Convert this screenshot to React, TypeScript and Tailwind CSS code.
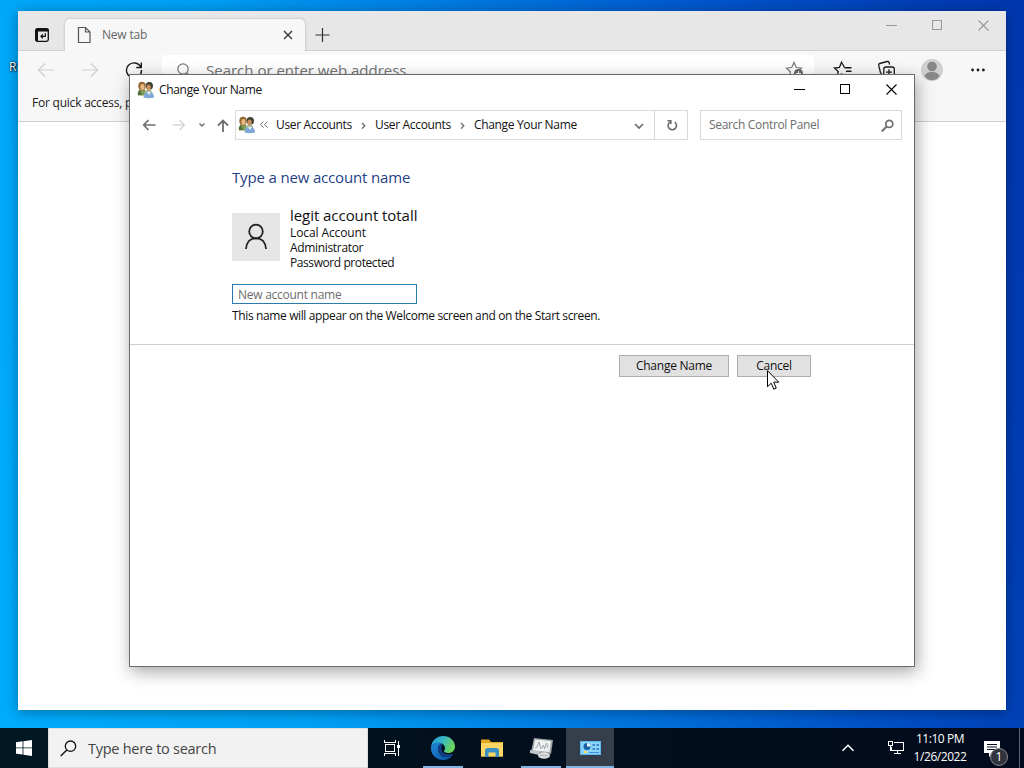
import type { ReactNode } from "react";

function Glyph({
  size = 16,
  className = "",
  children,
}: {
  size?: number;
  className?: string;
  children: ReactNode;
}) {
  return (
    <svg
      width={size}
      height={size}
      viewBox={`0 0 ${size} ${size}`}
      fill="none"
      stroke="currentColor"
      className={`block shrink-0 ${className}`}
    >
      {children}
    </svg>
  );
}

function UsersIcon() {
  return (
    <Glyph size={18} className="stroke-none">
      <path d="M1 14.500c-1-4 1-6.500 4-6.500s5 2 5 6.500z" fill="#7f9a55" />
      <path d="M1 12.500l1.500-4 2.500 5.500H1z" fill="#566b3c" />
      <ellipse cx="5" cy="5" rx="3.700" ry="4.200" fill="#94652f" />
      <ellipse cx="5.400" cy="6" rx="2.100" ry="2.900" fill="#e8b983" />
      <path d="M7.500 13c0-3 1.500-4.500 4-4.500s4 1.500 4 4.500z" fill="#a9bf9c" />
      <ellipse cx="12.300" cy="4.800" rx="3.700" ry="3.900" fill="#3f4030" />
      <ellipse cx="11.600" cy="6.500" rx="2.200" ry="2.900" fill="#c8905f" />
      <path d="M6.500 16.500c0-3.500 1.800-5.500 5.300-5.500s5.200 2 5.200 5.500c-3 1-7.500 1-10.500 0z" fill="#7fa8d6" />
      <path d="M10 11l2 3 2-3z" fill="#e7f0fa" />
    </Glyph>
  );
}

function PersonIcon() {
  return (
    <Glyph size={28} className="text-[#222]">
      <circle cx="14" cy="8.500" r="6.800" strokeWidth="1.800" />
      <path d="M4 26c.3-6.500 4-10.700 10-10.700S23.700 19.500 24 26" strokeWidth="1.800" />
    </Glyph>
  );
}

function WindowButtons({ color }: { color: string }) {
  return (
    <div className={`flex h-7 ${color}`}>
      <span className="flex w-[45px] items-center justify-center">
        <Glyph size={11}>
          <path d="M0 5.500h11" shapeRendering="crispEdges" />
        </Glyph>
      </span>
      <span className="flex w-[46px] items-center justify-center">
        <Glyph size={11}>
          <path d="M.5.5h9v9h-9z" shapeRendering="crispEdges" />
        </Glyph>
      </span>
      <span className="flex w-[46px] items-center justify-center">
        <Glyph size={11}>
          <path d="M.5.5l10 10M10.500.5l-10 10" strokeWidth="1.100" />
        </Glyph>
      </span>
    </div>
  );
}

function ToolCell({ children, className = "w-11" }: { children: ReactNode; className?: string }) {
  return (
    <span className={`flex h-[38px] shrink-0 items-center justify-center ${className}`}>{children}</span>
  );
}

function BrowserWindow() {
  return (
    <section className="absolute top-[11px] left-[18px] flex h-[699px] w-[988px] flex-col bg-white shadow-[0_2px_12px_rgba(0,0,0,0.35)]">
      <div className="flex h-10 bg-[#e7e7e7]">
        <div className="flex w-[47px] items-end justify-center border-b border-[#d0d0d0] pb-[7px]">
          <Glyph className="text-[#111]">
            <rect x="1.700" y="1.700" width="12.600" height="12.600" rx="1.800" strokeWidth="1.300" />
            <path d="M1.500 3.200h13" strokeWidth="2.600" />
            <path d="M2.800 3v11" strokeWidth="2.400" />
            <path d="M11.300 6.300v3H7.200M8.900 7.300L6.900 9.300l2 2" strokeWidth="1.200" />
          </Glyph>
        </div>
        <div className="mt-2 flex w-[240px] items-center rounded-t-[5px] bg-[#f7f7f7] shadow-[0_0_3px_rgba(0,0,0,0.22)] [clip-path:inset(-4px_-4px_0_-4px)]">
          <Glyph size={18} className="ml-[10px] text-[#555]">
            <path d="M3.500 1.500h7l4.500 4.500v10.500H3.500zM10.500 1.500V6H15" strokeWidth="1.200" />
          </Glyph>
          <span className="ml-[9px] text-[12px] tracking-[-0.2px] text-[#666]">New tab</span>
          <Glyph size={10} className="mr-[12px] ml-auto text-[#333]">
            <path d="M1 1l8 8M9 1L1 9" strokeWidth="1.300" />
          </Glyph>
        </div>
        <div className="flex flex-1 justify-between border-b border-[#d0d0d0]">
          <Glyph size={16} className="mt-4 ml-[9px] text-[#333]">
            <path d="M8.500 1v14M1.500 8h14" strokeWidth="1.200" />
          </Glyph>
          <WindowButtons color="text-[#989898]" />
        </div>
      </div>

      <div className="flex h-[71px] flex-col border-b border-[#cfcfcf] bg-[#f7f7f7]">
        <div className="flex h-[38px] pl-[6px] text-[#1b1b1b]">
          <ToolCell className="w-11 text-[#cfcfcf]">
            <Glyph size={18}>
              <path d="M17 9H1.500M8 2.500L1.500 9 8 15.500" strokeWidth="1.200" />
            </Glyph>
          </ToolCell>
          <ToolCell className="w-11 text-[#cfcfcf]">
            <Glyph size={18}>
              <path d="M1 9h15.500M10 2.500L16.500 9 10 15.500" strokeWidth="1.200" />
            </Glyph>
          </ToolCell>
          <ToolCell>
            <Glyph size={18}>
              <path d="M15.800 6.200A7.500 7.500 0 1 0 16.500 9M16.300 1.500v5h-5" strokeWidth="1.400" />
            </Glyph>
          </ToolCell>
          <div className="mt-1 ml-[6px] flex h-[30px] w-[652px] items-center rounded bg-white">
            <Glyph className="ml-[14px] text-[#777]">
              <circle cx="7" cy="7" r="5.200" strokeWidth="1.200" />
              <path d="M10.700 10.700l4 4" strokeWidth="1.200" />
            </Glyph>
            <span className="ml-[14px] text-[15px] text-[#757575]">Search or enter web address</span>
            <Glyph size={20} className="mr-[10px] ml-auto text-[#777]">
              <path
                d="M10 2.500l2.300 5 5.200.6-3.900 3.700 1 5.200-4.600-2.600L5.400 17l1-5.200L2.500 8.100l5.200-.6z"
                strokeWidth="1.200"
              />
              <circle cx="14.500" cy="13.500" r="4.500" fill="#666" stroke="none" />
              <path d="M14.500 11v5M12 13.500h5" stroke="#fff" />
            </Glyph>
          </div>
          <ToolCell className="ml-[7px] w-11">
            <Glyph size={20}>
              <path d="M11.500 7.800h7M13 11.300h5.500M13 14.800h5.500" strokeWidth="1.500" />
              <path
                d="M11.500 7.500L8.500 2.200 6.400 7.500l-5 .5 3.800 3.500-1 5 4.300-2.600 2 1.200"
                strokeWidth="1.300"
              />
            </Glyph>
          </ToolCell>
          <ToolCell>
            <Glyph size={20}>
              <path
                d="M5 13.500L3.600 13 1.700 5.400c-.2-1 .2-1.700 1-1.900l7.500-2c1-.2 1.600.2 1.900 1l.5 2"
                strokeWidth="1.300"
              />
              <rect x="6.800" y="7" width="10.500" height="10.500" rx="2" strokeWidth="1.300" />
              <path d="M12 9.200v6M9 12.200h6" strokeWidth="1.300" />
            </Glyph>
          </ToolCell>
          <ToolCell className="w-[46px]">
            <Glyph size={22} className="stroke-none">
              <circle cx="11" cy="11" r="11" fill="#d0d0d0" />
              <circle cx="11" cy="7.500" r="4.800" fill="#888" />
              <path
                d="M3.500 17c1.500-3.500 4.500-4 7.500-4s6 .5 7.500 4c-2 3-4.500 4.300-7.500 4.300S5.500 20 3.500 17z"
                fill="#888"
              />
            </Glyph>
          </ToolCell>
          <ToolCell className="w-[46px]">
            <Glyph size={16} className="fill-[#1b1b1b] stroke-none">
              <circle cx="2.600" cy="8" r="1.400" />
              <circle cx="8" cy="8" r="1.400" />
              <circle cx="13.400" cy="8" r="1.400" />
            </Glyph>
          </ToolCell>
        </div>
        <p className="mt-[5px] pl-[14px] text-[12px] leading-[18px] tracking-[-0.22px] text-[#1b1b1b]">
          For quick access, p
        </p>
      </div>
    </section>
  );
}

const crumbs = ["User Accounts", "User Accounts", "Change Your Name"];

function ControlPanelWindow() {
  return (
    <section className="absolute top-[74px] left-[129px] flex h-[593px] w-[786px] flex-col border border-[#6b6b6b] bg-white text-[12px] tracking-[-0.33px] text-[#111] shadow-[2px_5px_16px_rgba(0,0,0,0.35)]">
      <header className="flex h-[30px] items-start justify-between">
        <div className="flex h-[30px] items-center gap-[4px] pl-[7px]">
          <UsersIcon />
          <span>Change Your Name</span>
        </div>
        <WindowButtons color="text-black" />
      </header>

      <nav className="mt-[5px] flex h-[30px] items-center text-[#6d6d6d]">
        <Glyph size={14} className="ml-[12px]">
          <path d="M13.500 7H2M6.500 2L1.700 7l4.800 5" strokeWidth="1.700" />
        </Glyph>
        <Glyph size={14} className="ml-[16px] text-[#d6d6d6]">
          <path d="M.5 7H12M7.500 2l4.800 5-4.800 5" strokeWidth="1.500" />
        </Glyph>
        <Glyph size={8} className="ml-[12px]">
          <path d="M1.500 2.500L4 5l2.500-2.500" strokeWidth="1.400" />
        </Glyph>
        <Glyph size={14} className="ml-[10px]">
          <path d="M7 14V2.500M2 7.500l5-5 5 5" strokeWidth="1.800" />
        </Glyph>
        <div className="ml-[5px] flex h-[30px] w-[453px] items-center border border-[#d9d9d9]">
          <span className="ml-[2px]">
            <UsersIcon />
          </span>
          <Glyph size={10} className="ml-[3px]">
            <path d="M4.500 1.500L1.500 4.500l3 3M8.500 1.500L5.500 4.500l3 3" />
          </Glyph>
          <ol className="ml-[7px] flex items-center text-[#111]">
            {crumbs.map((crumb, i) => (
              <li key={i} className="flex items-center">
                {i > 0 && (
                  <Glyph size={7} className="mx-[8px] text-[#666]">
                    <path d="M2 1l2.800 2.800L2 6.600" strokeWidth="1.300" />
                  </Glyph>
                )}
                <span>{crumb}</span>
              </li>
            ))}
          </ol>
          <Glyph size={10} className="mr-[10px] ml-auto">
            <path d="M1 4l4 4 4-4" strokeWidth="1.700" />
          </Glyph>
          <span className="flex h-full w-[33px] items-center justify-center border-l border-[#d9d9d9]">
            <Glyph size={12} className="ml-px">
              <path d="M8.800 3.200A4.200 4.200 0 1 1 3.800 3.200M1.500 1.800h3.300v3.300" strokeWidth="1.600" />
            </Glyph>
          </span>
        </div>
        <div className="ml-3 flex h-[30px] w-[202px] items-center justify-between border border-[#d9d9d9] pr-[7px] pl-[8px]">
          <span>Search Control Panel</span>
          <Glyph size={13}>
            <circle cx="8.300" cy="4.900" r="3.500" strokeWidth="1.700" />
            <path d="M5.700 7.500L.8 12.400" strokeWidth="2" />
          </Glyph>
        </div>
      </nav>

      <main className="mt-[25px] flex h-[180px] flex-col border-b border-[#cfcfcf] pl-[102px]">
        <h1 className="mt-px text-[15px] leading-[22px] tracking-[-0.16px] text-[#1f3f87]">
          Type a new account name
        </h1>
        <div className="mt-[18px] flex h-[66px]">
          <div className="mt-[7px] flex h-12 w-12 items-center justify-center bg-[#e6e6e6]">
            <PersonIcon />
          </div>
          <div className="ml-[10px] leading-[15px]">
            <h2 className="text-[15px] leading-[19px] tracking-[-0.05px]">legit account totall</h2>
            <p className="tracking-[-0.1px]">Local Account</p>
            <p>Administrator</p>
            <p className="tracking-[-0.42px]">Password protected</p>
          </div>
        </div>
        <input
          className="mt-[12px] h-5 w-[185px] border border-[#2a7ab0] bg-white px-[5px] text-[12px] tracking-[-0.26px] outline-none placeholder:text-[#6d6d6d]"
          placeholder="New account name"
        />
        <p className="mt-[4px] leading-[16px] tracking-[-0.37px]">
          This name will appear on the Welcome screen and on the Start screen.
        </p>
      </main>

      <footer className="mt-[10px] flex justify-end gap-2 pr-[103px] tracking-[-0.25px]">
        <button className="h-[22px] w-[110px] border border-[#adadad] bg-[#e1e1e1]">Change Name</button>
        <button className="h-[22px] w-[74px] border border-[#adadad] bg-[#e1e1e1]">Cancel</button>
      </footer>
    </section>
  );
}

function EdgeLogo() {
  return (
    <svg width="26" height="26" viewBox="0 0 26 26">
      <defs>
        <linearGradient id="edge-top" x1="0" y1="0" x2="1" y2=".4">
          <stop offset="0" stopColor="#2298d5" />
          <stop offset=".5" stopColor="#35b8c4" />
          <stop offset="1" stopColor="#6bd45c" />
        </linearGradient>
        <linearGradient id="edge-low" x1="0" y1="0" x2="1" y2="1">
          <stop offset="0" stopColor="#1e8ad8" />
          <stop offset="1" stopColor="#0c50a0" />
        </linearGradient>
      </defs>
      <path
        d="M1 12C2 5 7 1 13 1c7 0 12 5 12 10.500 0 4-3 6.500-6.500 6.500-3 0-4.500-1-4.500-2 0-.7 1-1.200 1-3 0-3-3-5-6.500-5S2 9.500 1 12z"
        fill="url(#edge-top)"
      />
      <path
        d="M1 12c1.500-3 4-4.500 7.500-4.500 1.500 0 3 .4 4 1.100C8.500 9 7.500 13 8.500 16.500S13 22.500 17 22c2-.2 4-1 5.500-2-2 3.300-5.500 5-9.500 5C6 25 .5 19.500 1 12z"
        fill="url(#edge-low)"
      />
      <path
        d="M12.500 8.600C8.500 9 7.500 13 8.500 16.500S13 22.500 17 22c2-.2 4-1 5.500-2 .6-.9.300-1.500-.5-1.200-5 1.700-10.500-.8-10.500-5.300 0-2 .8-3.700 1-4.900z"
        fill="#123e86"
      />
    </svg>
  );
}

function FolderIcon() {
  return (
    <svg width="22" height="20" viewBox="0 0 22 20">
      <path d="M0 1.500h8l2 2.500h12v14.500H0z" fill="#e5a823" />
      <path d="M0 5h22v13.500H0z" fill="#fbd765" />
      <path
        d="M4 19v-6.500c0-1.500 1-2.500 2.500-2.500h9c1.500 0 2.500 1 2.500 2.500V19h-3.500v-4.500h-7V19z"
        fill="#3c8fc5"
      />
    </svg>
  );
}

function MonitorIcon() {
  return (
    <svg width="25" height="24" viewBox="0 0 25 24">
      <path d="M5 2l19 2-2 14L2 16z" fill="#9da3a5" />
      <path d="M6 3.500l16 1.500-1.500 11L4 14.500z" fill="#eef1f1" />
      <path
        d="M6 12l2-1 2-5 2 7 2.500-4 1 4 2-6 1.500 5"
        stroke="#8b9495"
        fill="none"
        strokeWidth=".8"
      />
      <path d="M1 14l10 1-1 4-9-2z" fill="#bfc5c6" />
      <ellipse cx="15" cy="19.500" rx="6" ry="3.300" fill="#d9dddd" />
      <path d="M11 19.500h8" stroke="#b0b5b5" />
    </svg>
  );
}

function PanelIcon() {
  return (
    <svg width="21" height="16" viewBox="0 0 21 16">
      <path d="M0 1h21v14H0z" fill="#5bb9ef" />
      <path d="M1 2h19v12H1z" fill="#8ad5fa" />
      <circle cx="7" cy="6.500" r="3.500" fill="#1761a5" />
      <path d="M7 6.500V3a3.500 3.500 0 0 1 3.500 3.500z" fill="#e8f8ff" />
      <path d="M12.500 4H15v2h-2.500zM16.500 4H19v2h-2.500zM12.500 8H15v2h-2.500zM16.500 8H19v2h-2.500z" fill="#3a86cb" />
      <path d="M4 12h3" stroke="#f5d85c" strokeWidth="2" />
      <path d="M9 12.500h10" stroke="#3a92d2" />
    </svg>
  );
}

function TaskButton({
  children,
  open = false,
  active = false,
}: {
  children: ReactNode;
  open?: boolean;
  active?: boolean;
}) {
  return (
    <span className={`flex h-10 w-12 flex-col items-center ${active ? "bg-[#353f4b]" : ""}`}>
      <span className="flex h-[38px] items-center pt-[2px]">{children}</span>
      {(open || active) && <span className={`h-[2px] bg-[#83b5e3] ${active ? "w-12" : "w-10"}`} />}
    </span>
  );
}

function Taskbar() {
  return (
    <footer className="absolute bottom-0 left-0 flex h-10 w-full bg-linear-to-r from-[#011823] via-[#020f1c] to-[#020b1d] text-white">
      <span className="flex w-12 items-center justify-center">
        <Glyph className="fill-white stroke-none">
          <path d="M0 2.200L6.600 1.300v6.200H0zM7.400 1.200L16 0v7.500H7.400zM0 8.300h6.600v6.300L0 13.700zM7.400 8.300H16V16l-8.600-1.200z" />
        </Glyph>
      </span>
      <div className="flex w-[320px] items-center border border-[#dcdcdc] bg-[#f2f2f2] pl-[11px]">
        <Glyph size={17} className="text-[#111]">
          <circle cx="10.500" cy="6.200" r="5.200" strokeWidth="1.300" />
          <path d="M6.800 9.900L.7 16" strokeWidth="1.400" />
        </Glyph>
        <span className="mt-px ml-[11px] text-[14.5px] tracking-[-0.27px] text-[#444]">
          Type here to search
        </span>
      </div>
      <div className="flex">
        <TaskButton>
          <Glyph size={18}>
            <path
              d="M2.500 5.500h9v7h-9zM1.500 1v2.500h11V1M1.500 17v-2.500h11V17M15.500 1.500v15"
              shapeRendering="crispEdges"
            />
            <path d="M14 6h3v3h-3z" fill="currentColor" stroke="none" />
          </Glyph>
        </TaskButton>
        <span className="ml-[3px] flex gap-px">
          <TaskButton open>
            <EdgeLogo />
          </TaskButton>
          <TaskButton>
            <FolderIcon />
          </TaskButton>
          <TaskButton open>
            <MonitorIcon />
          </TaskButton>
          <TaskButton active>
            <PanelIcon />
          </TaskButton>
        </span>
      </div>
      <div className="ml-auto flex items-center">
        <Glyph size={14} className="mr-[32px]">
          <path d="M1.500 9.700L7 4.200l5.500 5.500" strokeWidth="1.500" />
        </Glyph>
        <Glyph size={18} className="mr-[8px]">
          <path
            d="M6.500 3.500h10v8h-12v-4M10.500 11.500v3M7 14.500h7M1.500 2.500h4v4h-4zM3.500 6.500v5"
            shapeRendering="crispEdges"
          />
        </Glyph>
        <div className="w-[54px] text-center text-[12px] leading-[18px] tracking-[-0.45px] whitespace-nowrap">
          <p>11:10 PM</p>
          <p>1/26/2022</p>
        </div>
        <div className="relative mt-[9px] ml-[16px] h-[26px] w-[25px]">
          <Glyph size={18} className="stroke-none">
            <path d="M1 1h16v12h-7l-4 4v-4H1z" fill="#fff" />
            <path d="M4 4.500h10M4 7h10M4 9.500h10" stroke="#020b1d" />
          </Glyph>
          <span className="absolute top-[8px] left-[7px] flex h-[18px] w-[18px] items-center justify-center rounded-full border border-[#888] bg-[#30343c] text-[12px] leading-none">
            1
          </span>
        </div>
        <span className="ml-[11px] h-10 w-[5px] border-l border-[#5a6270]" />
      </div>
    </footer>
  );
}

export default function App() {
  return (
    <div className="relative h-[768px] w-[1024px] overflow-hidden bg-[linear-gradient(80deg,#00acfd_0%,#00a0f5_28%,#0078e0_52%,#0052c8_75%,#003db4_92%,#0036ae_100%)] font-['Open_Sans','Noto_Sans',sans-serif]">
      <span className="absolute top-[59px] left-[9px] w-[9px] overflow-hidden text-[12px] leading-[15px] text-white [text-shadow:1px_1px_2px_#000,0_0_2px_#000]">
        R
      </span>
      <BrowserWindow />
      <ControlPanelWindow />
      <Taskbar />
      <svg className="absolute top-[370px] left-[767px]" width="13" height="21" viewBox="0 0 13 21">
        <path d="M.5.7v16l3.700-3.500 2.600 6 2.500-1.100-2.600-5.900h5.100z" fill="#fff" stroke="#000" />
      </svg>
    </div>
  );
}
